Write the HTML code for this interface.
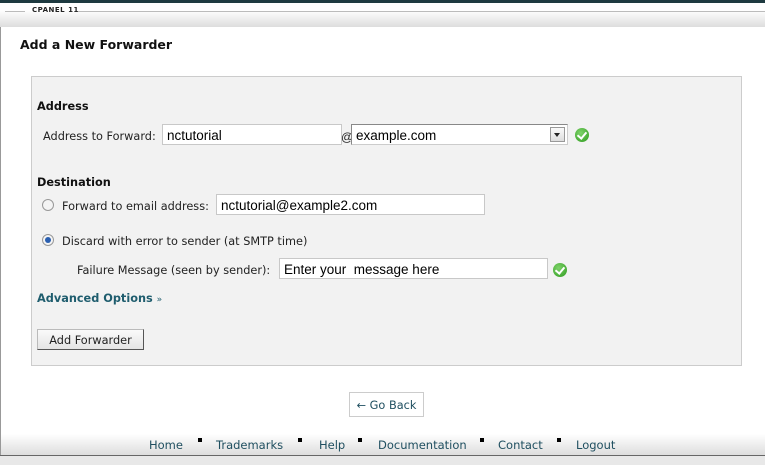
<!DOCTYPE html>
<html><head><style>
*{margin:0;padding:0;box-sizing:border-box}
body{width:765px;height:465px;background:#fff;position:relative;overflow:hidden;font-family:"DejaVu Sans","Liberation Sans",sans-serif;font-size:11.3px;color:#222}
.a{position:absolute;white-space:nowrap}
.inp{position:absolute;background:#fff;border:1px solid #c8c8c8;font-family:"Liberation Sans",sans-serif;font-size:13.5px;color:#000;padding:3px 4px 1px;height:21px}
.chk{position:absolute;width:14px;height:14px;border-radius:50%;background:radial-gradient(circle at 40% 35%,#7ed36a,#2e9a1e);}
.chk:after{content:"";position:absolute;left:4px;top:2px;width:4px;height:7px;border:solid #fff;border-width:0 2px 2px 0;transform:rotate(40deg)}
.rad{position:absolute;width:12px;height:12px;border-radius:50%;border:1px solid #999;background:#f4f4f4}
.b{font-weight:bold;color:#111;font-size:11.3px}
.f{position:absolute;top:438px;font-size:11.5px;color:#1f4f60}
.s{position:absolute;top:438px;width:4px;height:4px;background:#000}
</style></head><body>
<div class="a" style="left:0;top:0;width:765px;height:3px;background:#1e3a40"></div>
<div class="a" style="left:0;top:3px;width:765px;height:24px;background:linear-gradient(#fff 0,#fff 30%,#ddd 100%)"></div>
<div class="a" style="left:5px;top:11px;width:20px;height:1px;background:#bbb"></div>
<div class="a" style="left:77px;top:11px;width:688px;height:1px;background:#bbb"></div>
<div class="a" style="left:32px;top:6px;font-size:7px;font-weight:bold;letter-spacing:.5px;color:#222">CPANEL 11</div>
<div class="a" style="left:0;top:27px;width:1px;height:430px;background:#999"></div>
<div class="a" style="left:20px;top:37px;font-size:12.5px;font-weight:bold;color:#111">Add a New Forwarder</div>
<div class="a" style="left:31px;top:76px;width:711px;height:290px;background:#f2f2f2;border:1px solid #ccc"></div>
<div class="a b" style="left:37px;top:100px">Address</div>
<div class="a" style="left:43px;top:130px">Address to Forward:</div>
<div class="inp" style="left:162px;top:124px;width:180px">nctutorial</div>
<div class="a" style="left:341px;top:130px;font-family:'Liberation Sans';font-size:12px">@</div>
<div class="inp" style="left:351px;top:124px;width:217px;border-color:#888 #ccc #ccc #888">example.com</div>
<div class="a" style="left:550px;top:127px;width:15px;height:15px;background:linear-gradient(#fafafa,#ddd);border:1px solid #999"></div>
<div class="a" style="left:554px;top:133px;border:3px solid transparent;border-top:4px solid #222;width:0;height:0"></div>
<div class="chk" style="left:575px;top:128px"></div>
<div class="a b" style="left:37px;top:176px">Destination</div>
<div class="rad" style="left:42px;top:199px"></div>
<div class="a" style="left:62px;top:200px">Forward to email address:</div>
<div class="inp" style="left:216px;top:194px;width:269px">nctutorial@example2.com</div>
<div class="rad" style="left:42px;top:234px"></div>
<div class="a" style="left:45px;top:237px;width:6px;height:6px;border-radius:50%;background:#2a5fb0"></div>
<div class="a" style="left:62px;top:235px">Discard with error to sender (at SMTP time)</div>
<div class="a" style="left:77px;top:264px">Failure Message (seen by sender):</div>
<div class="inp" style="left:279px;top:258px;width:269px">Enter your &nbsp;message here</div>
<div class="chk" style="left:553px;top:263px"></div>
<div class="a" style="left:37px;top:292px;font-weight:bold;font-size:11.3px;color:#1f5d6e">Advanced Options <span style="font-weight:normal;font-size:9px">»</span></div>
<div class="a" style="left:37px;top:329px;width:107px;height:21px;background:linear-gradient(#fafafa,#e4e4e4);border:1px solid #bbb;border-right-color:#555;border-bottom-color:#555;text-align:center;line-height:22px">Add Forwarder</div>
<div class="a" style="left:349px;top:392px;width:75px;height:25px;border:1px solid #ccc;text-align:center;line-height:25px;font-size:11.3px;color:#1f4f60">← Go Back</div>
<div class="a" style="left:1px;top:434px;width:764px;height:21px;background:linear-gradient(#fff,#ddd)"></div>
<div class="a" style="left:0;top:455px;width:765px;height:1px;background:#666"></div>
<div class="a" style="left:0;top:456px;width:765px;height:9px;background:#e8e8e8"></div>
<div class="f" style="left:149px">Home</div><div class="s" style="left:198px"></div>
<div class="f" style="left:216px">Trademarks</div><div class="s" style="left:298px"></div>
<div class="f" style="left:319px">Help</div><div class="s" style="left:358px"></div>
<div class="f" style="left:378px">Documentation</div><div class="s" style="left:480px"></div>
<div class="f" style="left:498px">Contact</div><div class="s" style="left:557px"></div>
<div class="f" style="left:576px">Logout</div>
</body></html>
